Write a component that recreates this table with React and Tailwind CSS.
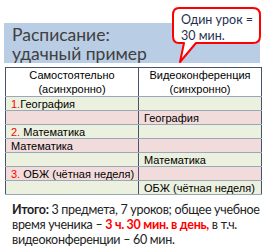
import React from 'react';

const rows = [
  { a: [['1.', true], ['География']], b: '', bg: 'bg-[#ebf1de]' },
  { a: null, b: 'География', bg: 'bg-[#f2dcdb]' },
  { a: [['2. ', true], ['Математика']], b: '', bg: 'bg-[#ebf1de]' },
  { a: [['Математика']], b: '', bg: 'bg-[#f2dcdb]' },
  { a: null, b: 'Математика', bg: 'bg-[#ebf1de]' },
  { a: [['3. ', true], ['ОБЖ (чётная неделя)']], b: '', bg: 'bg-[#f2dcdb]' },
  { a: null, b: 'ОБЖ (чётная неделя)', bg: 'bg-[#ebf1de]' },
];

const Callout = () => (
  <div className="absolute left-[172px] top-[7px] w-[89px] h-[56px]">
    <svg width="89" height="56" className="absolute inset-0">
      <path
        d="M7 1 H81 Q88 1 88 8 V29 Q88 36 81 36 H24 L8 55 L12 36 H7 Q1 36 1 29 V8 Q1 1 7 1 Z"
        fill="#fff"
        stroke="#ff0000"
        strokeWidth="2"
        strokeLinejoin="round"
      />
    </svg>
    <div className="relative pl-[9px] pt-[5px] text-[12.5px] leading-[16px] text-[#1f2f4f] font-['Lato',sans-serif] whitespace-nowrap">
      <div>Один урок&nbsp;=</div>
      <div>30 мин.</div>
    </div>
  </div>
);

export default function App() {
  return (
    <div className="relative w-[268px] h-[250px] bg-white overflow-hidden">
      <div className="pt-[23px] pl-[4px]">
        <div className="w-[256px] h-[40px] bg-[#b9cde5] pl-[8px] text-[17.5px] leading-[19px] text-[#404040] font-['Lato',sans-serif]">
          <div className="pt-[2px]">Расписание:</div>
          <div>удачный пример</div>
        </div>
      </div>

      <Callout />

      <table className="ml-[5px] mt-[4px] w-[256px] border-collapse border border-[#44546a] text-[11px] text-black font-['Liberation_Sans',sans-serif] table-fixed">
        <colgroup>
          <col className="w-[133px]" />
          <col className="w-[123px]" />
        </colgroup>
        <thead>
          <tr className="h-[29px] bg-white">
            <th className="font-normal leading-[14px] border-r border-[#44546a] border-b border-b-[#9aa7b8]">
              Самостоятельно<br />(асинхронно)
            </th>
            <th className="font-normal leading-[14px] border-b border-b-[#9aa7b8]">
              Видеоконференция<br />(синхронно)
            </th>
          </tr>
        </thead>
        <tbody>
          {rows.map((r, i) => (
            <tr key={i} className={`h-[14px] ${r.bg}`}>
              <td className="px-[5px] py-0 leading-[12px] border-r border-[#44546a] border-b border-b-[#9aa7b8] whitespace-nowrap">
                {r.a && r.a.map(([t, red], j) => (
                  <span key={j} className={red ? 'text-[#ff0000]' : ''}>{t}</span>
                ))}
              </td>
              <td className="px-[5px] py-0 leading-[12px] border-b border-b-[#9aa7b8] whitespace-nowrap">{r.b}</td>
            </tr>
          ))}
        </tbody>
      </table>

      <div className="pl-[12px] pt-[7px] text-[12.5px] leading-[15px] tracking-[-0.3px] text-[#222] font-['Lato',sans-serif] whitespace-nowrap">
        <b>Итого:</b> 3 предмета, 7 уроков; общее учебное<br />
        время ученика – <b className="text-[#ff0000]">3 ч. 30 мин. в день,</b> в т.ч.<br />
        видеоконференции – 60 мин.
      </div>
    </div>
  );
}
